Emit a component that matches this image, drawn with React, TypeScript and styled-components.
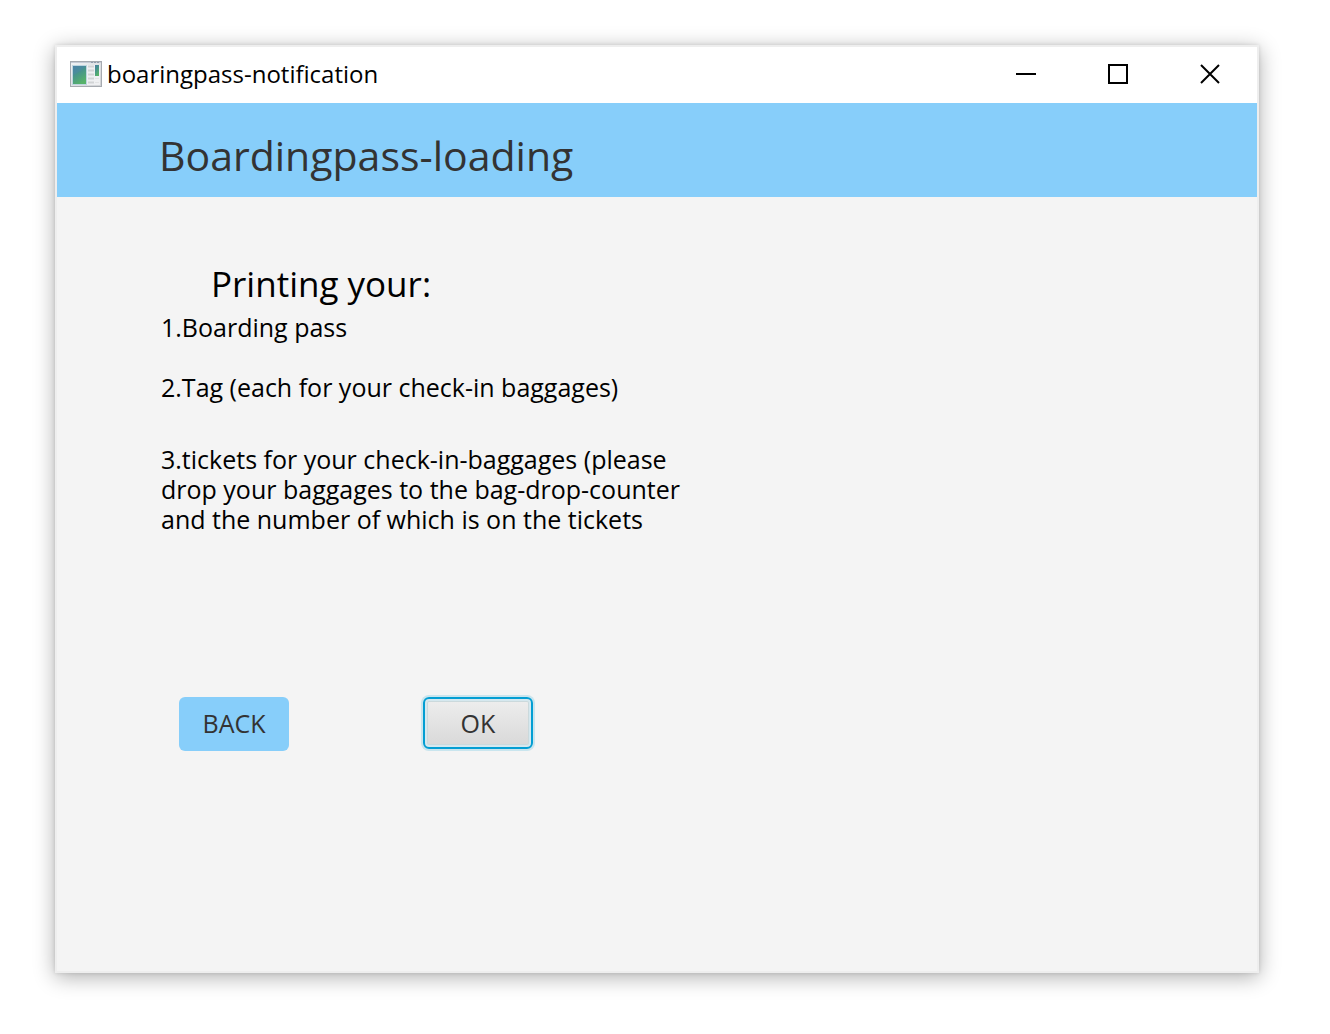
import React from "react";
import styled, { createGlobalStyle } from "styled-components";

const GlobalStyle = createGlobalStyle`
  * {
    box-sizing: border-box;
  }
  body {
    margin: 0;
    background: #ffffff;
    color: #000000;
    font-family: "Open Sans", "Noto Sans", sans-serif;
  }
`;

const Desktop = styled.div`
  padding: 45px 71px 61px 55px;
`;

const Window = styled.main`
  border: 2px solid #eeeeee;
  background: #f4f4f4;
  box-shadow: 0 4px 20px rgba(0, 0, 0, 0.32), 0 0 4px rgba(0, 0, 0, 0.12);
`;

const TitleBar = styled.header`
  display: flex;
  align-items: center;
  height: 56px;
  padding: 0 1px 2px 13px;
  background: #ffffff;
`;

const WindowTitle = styled.span`
  flex: 1;
  margin-left: 5px;
  font-size: 24px;
  line-height: 32px;
`;

const CaptionButton = styled.button`
  display: flex;
  align-items: center;
  justify-content: center;
  width: 92px;
  height: 54px;
  padding: 0;
  border: 0;
  background: transparent;
`;

const Banner = styled.div`
  padding: 24px 104px 14px 102px;
  background: #87cefa;
`;

const Heading = styled.h1`
  margin: 0;
  color: #333333;
  font-size: 41px;
  font-weight: 400;
  line-height: 56px;
`;

const Content = styled.div`
  padding: 63px 104px 220px;
`;

const Subheading = styled.h2`
  margin: 0 0 4px 50px;
  font-size: 35px;
  font-weight: 400;
  line-height: 48px;
`;

const Items = styled.div`
  max-width: 540px;
  font-size: 25px;
  line-height: 30px;
`;

const Item = styled.p<{ $gap: number }>`
  margin: 0 0 ${(p) => p.$gap}px;
`;

const Actions = styled.div`
  display: flex;
  gap: 134px;
  padding-left: 18px;
`;

const ActionButton = styled.button<{ $primary?: boolean }>`
  width: 110px;
  height: ${(p) => (p.$primary ? 52 : 54)}px;
  padding: ${(p) => (p.$primary ? "0" : "0 0 2px")};
  border: ${(p) => (p.$primary ? "2px solid #039ed3" : "0")};
  border-radius: 6px;
  background: ${(p) =>
    p.$primary ? "linear-gradient(#eeeeee, #d8d8d8)" : "#87cefa"};
  box-shadow: ${(p) =>
    p.$primary
      ? "0 0 0 2px rgba(3, 158, 211, 0.18), inset 0 0 0 2px #d5e8ef, inset 0 0 0 3px #cbd9dc"
      : "none"};
  color: #333333;
  font-family: inherit;
  font-size: 25px;
  line-height: 32px;
`;

const AppIcon = () => (
  <svg width="32" height="26" viewBox="0 0 32 26" aria-hidden="true">
    <defs>
      <linearGradient id="pane" x1="0" y1="0" x2="0.5" y2="1">
        <stop offset="0" stopColor="#4a7da3" />
        <stop offset="0.5" stopColor="#48958a" />
        <stop offset="1" stopColor="#57b269" />
      </linearGradient>
      <linearGradient id="frame" x1="0" y1="0" x2="1" y2="1">
        <stop offset="0" stopColor="#f2f4f6" />
        <stop offset="1" stopColor="#cfd1d4" />
      </linearGradient>
    </defs>
    <rect x="0.5" y="0.5" width="31" height="25" fill="url(#frame)" stroke="#a6aab0" />
    <path d="M1 1.5h30" stroke="#c5cbd6" />
    <path d="M21 1.5h8" stroke="#929dac" strokeDasharray="2 1" />
    <rect x="2" y="4" width="28" height="20" fill="#eff0f2" />
    <rect x="2.5" y="4.5" width="14" height="19" fill="url(#pane)" stroke="#bdd5df" />
    <path d="M3 14C8 12 12 9 16 5V5H3Z" fill="#4e86b0" opacity="0.4" />
    <path d="M18 5.5h6M18 9.5h6M18 13.5h6M18 17.5h6M18 21.5h6" stroke="#d1d3d5" strokeWidth="2" />
    <rect x="25" y="4" width="4" height="11" fill="url(#pane)" />
    <path d="M25 17.5h4M25 21.5h4" stroke="#e2e3e4" />
  </svg>
);

const captionControls = [
  { label: "Minimize", path: "M0 10h20" },
  { label: "Maximize", path: "M1 1h18v18H1Z" },
  { label: "Close", path: "M1 1L19 19M19 1L1 19" },
];

const items = [
  { text: "1.Boarding pass", gap: 30 },
  { text: "2.Tag (each for your check-in baggages)", gap: 42 },
  {
    text: "3.tickets for your check-in-baggages (please drop your baggages to the bag-drop-counter and the number of which is on the tickets",
    gap: 163,
  },
];

export default function App() {
  return (
    <Desktop>
      <GlobalStyle />
      <Window>
        <TitleBar>
          <AppIcon />
          <WindowTitle>boaringpass-notification</WindowTitle>
          {captionControls.map((c) => (
            <CaptionButton key={c.label} type="button" aria-label={c.label}>
              <svg width="20" height="20" viewBox="0 0 20 20" fill="none" stroke="#000000" strokeWidth="2">
                <path d={c.path} />
              </svg>
            </CaptionButton>
          ))}
        </TitleBar>
        <Banner>
          <Heading>Boardingpass-loading</Heading>
        </Banner>
        <Content>
          <Subheading>Printing your:</Subheading>
          <Items>
            {items.map((item) => (
              <Item key={item.text} $gap={item.gap}>
                {item.text}
              </Item>
            ))}
          </Items>
          <Actions>
            <ActionButton type="button">BACK</ActionButton>
            <ActionButton type="button" $primary>
              OK
            </ActionButton>
          </Actions>
        </Content>
      </Window>
    </Desktop>
  );
}
